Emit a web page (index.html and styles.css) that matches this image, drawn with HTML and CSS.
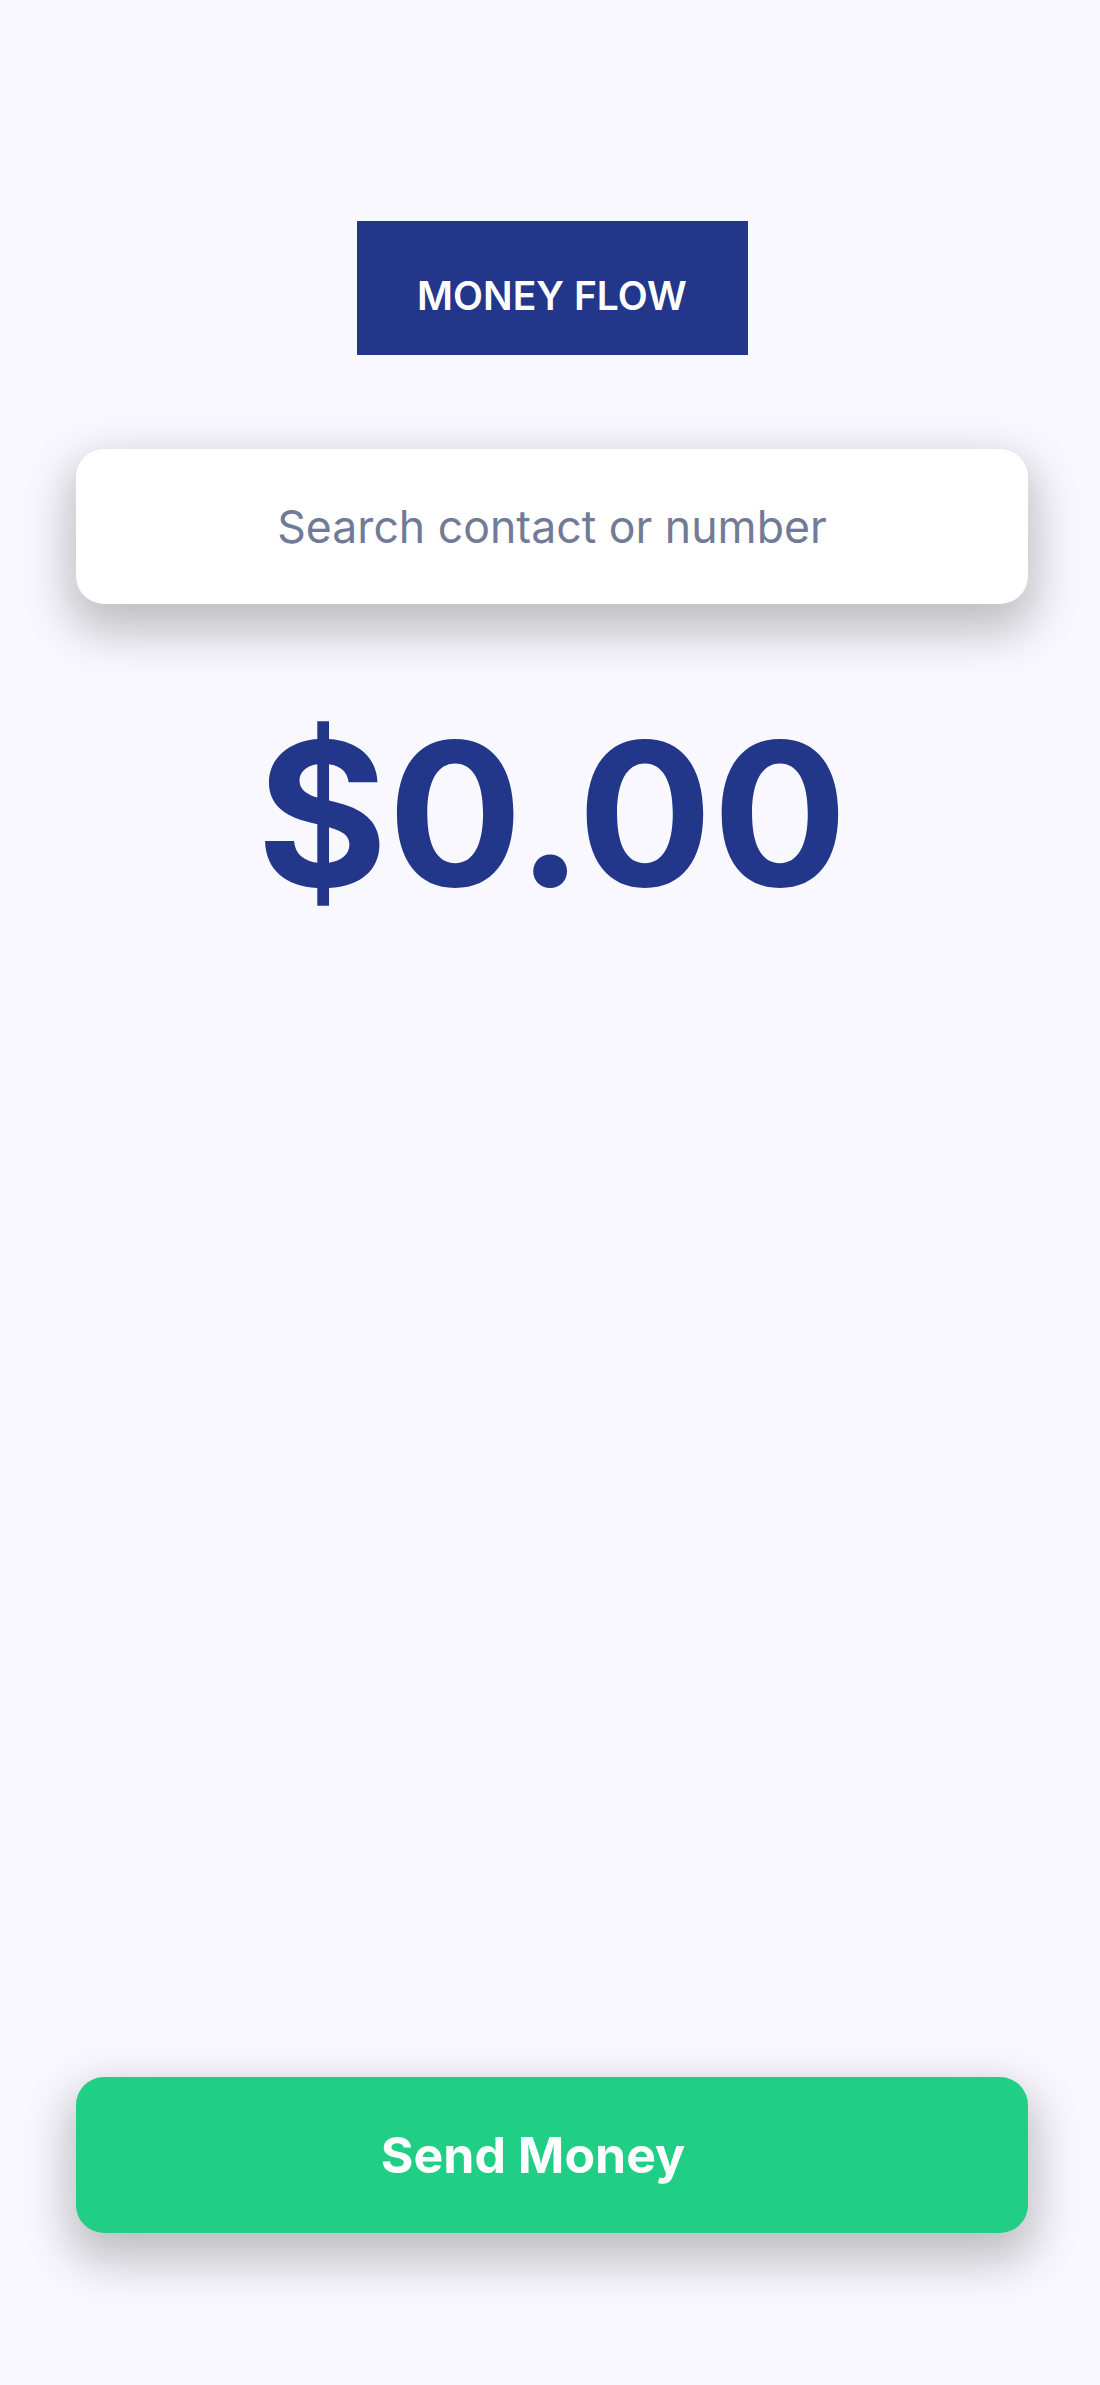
FILE: index.html
```html
<!DOCTYPE html>
<html lang="en">
<head>
  <meta charset="UTF-8">
  <title>Money Flow</title>
  <meta name="viewport" content="width=device-width, initial-scale=1.0">
  <link rel="stylesheet" href="styles.css">
</head>
<body>
  <main class="app">
    <div class="logo">MONEY FLOW</div>

    <input class="search" type="text" placeholder="Search contact or number" />

    <div class="amount">$0.00</div>

    <button class="send">Send Money</button>
  </main>
</body>
</html>
```

FILE: styles.css
```css
html, body {
  margin: 0;
  padding: 0;
}

body {
  background-color: #f9f8fe;
  font-family: Inter, 'Noto Sans', sans-serif;
}

.app {
  min-height: 100vh;
  box-sizing: border-box;
  display: flex;
  flex-direction: column;
  align-items: center;
  padding: 221px 72px 152px 76px;
}

.logo {
  width: 391px;
  height: 134px;
  box-sizing: border-box;
  padding-top: 14px;
  background-color: #22368a;
  color: #ffffff;
  font-size: 39px;
  font-weight: 600;
  display: flex;
  align-items: center;
  justify-content: center;
}

.search {
  width: 100%;
  height: 155px;
  margin-top: 94px;
  box-sizing: border-box;
  border: none;
  border-radius: 28px;
  background-color: #ffffff;
  box-shadow: 0 20px 48px 8px rgba(0, 0, 0, 0.24);
  font-family: Inter, 'Noto Sans', sans-serif;
  font-size: 44.6px;
  text-align: center;
  color: #727b96;
  outline: none;
}

.search::placeholder {
  color: #727b96;
}

.amount {
  margin-top: 109px;
  font-size: 200px;
  font-weight: 700;
  line-height: 1;
  color: #22368a;
}

.send {
  margin-top: auto;
  width: 100%;
  height: 156px;
  padding: 0 38px 0 0;
  border: none;
  border-radius: 28px;
  background-color: #20cf85;
  color: #ffffff;
  font-family: Inter, 'Noto Sans', sans-serif;
  font-size: 50px;
  font-weight: 700;
  box-shadow: 0 20px 48px 8px rgba(0, 0, 0, 0.24);
  cursor: pointer;
}
```
